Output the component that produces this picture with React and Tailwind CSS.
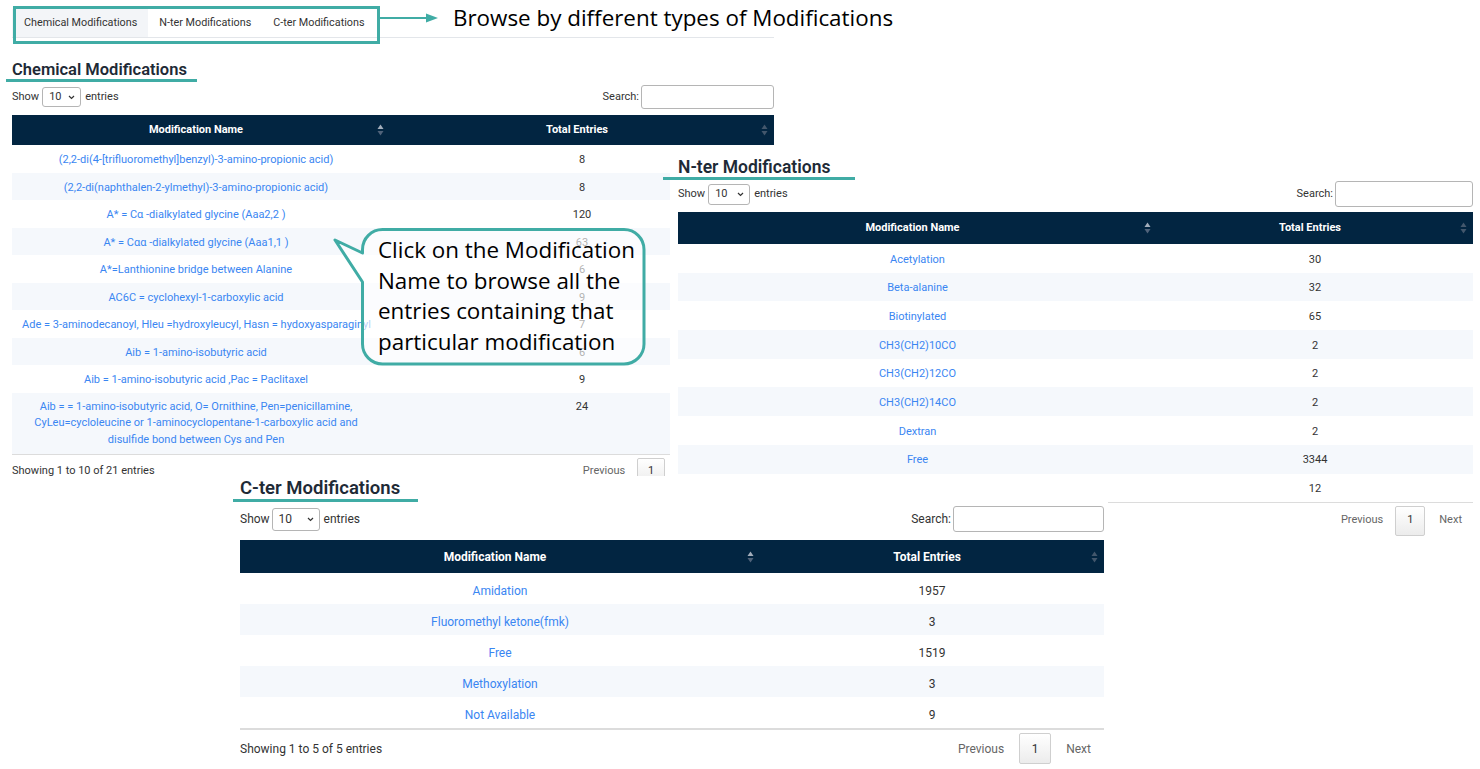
import React from "react";

const chemRows = [
  ["(2,2-di(4-[trifluoromethyl]benzyl)-3-amino-propionic acid)", "8"],
  ["(2,2-di(naphthalen-2-ylmethyl)-3-amino-propionic acid)", "8"],
  ["A* = Cα -dialkylated glycine (Aaa2,2 )", "120"],
  ["A* = Cαα -dialkylated glycine (Aaa1,1 )", "63"],
  ["A*=Lanthionine bridge between Alanine", "6"],
  ["AC6C = cyclohexyl-1-carboxylic acid", "9"],
  ["Ade = 3-aminodecanoyl, Hleu =hydroxyleucyl, Hasn = hydoxyasparaginyl", "7"],
  ["Aib = 1-amino-isobutyric acid", "6"],
  ["Aib = 1-amino-isobutyric acid ,Pac = Paclitaxel", "9"],
];

const nterRows = [
  ["Acetylation", "30"],
  ["Beta-alanine", "32"],
  ["Biotinylated", "65"],
  ["CH3(CH2)10CO", "2"],
  ["CH3(CH2)12CO", "2"],
  ["CH3(CH2)14CO", "2"],
  ["Dextran", "2"],
  ["Free", "3344"],
  ["", "12"],
];

const cterRows = [
  ["Amidation", "1957"],
  ["Fluoromethyl ketone(fmk)", "3"],
  ["Free", "1519"],
  ["Methoxylation", "3"],
  ["Not Available", "9"],
];

function SortIcon({ active }) {
  return (
    <svg
      width="7"
      height="14"
      viewBox="0 0 7 14"
      className="absolute right-[6px] top-1/2 -translate-y-1/2"
    >
      <path d="M0.5 6 L3.5 1.5 L6.5 6 Z" fill={active ? "#a3aebb" : "#43576c"} />
      <path d="M0.5 8 L3.5 12.5 L6.5 8 Z" fill={active ? "#50637a" : "#43576c"} />
    </svg>
  );
}

function Select({ cls }) {
  return (
    <div
      className={
        "flex items-center justify-between border border-[#b5b5b5] rounded-[3px] bg-white pl-[6px] pr-[5px] " +
        cls
      }
    >
      <span>10</span>
      <svg width="7" height="5" viewBox="0 0 7 5">
        <path d="M1 1 L3.5 3.5 L6 1" fill="none" stroke="#333" strokeWidth="1.2" />
      </svg>
    </div>
  );
}

function HeaderRow({ hCls, c1Cls }) {
  return (
    <div className={"flex bg-[#022541] text-white font-bold " + hCls}>
      <div className={"relative shrink-0 flex items-center justify-center pl-[10px] pr-[20px] " + c1Cls}>
        Modification Name
        <SortIcon active />
      </div>
      <div className="relative flex-1 flex items-center justify-center pl-[10px] pr-[20px]">
        Total Entries
        <SortIcon />
      </div>
    </div>
  );
}

function PageBtn({ cls, children }) {
  return (
    <div
      className={
        "flex items-center justify-center border border-[#cfcfcf] rounded-[2px] bg-gradient-to-b from-white to-[#ececec] text-[#333] " +
        cls
      }
    >
      {children}
    </div>
  );
}

function ChemPanel() {
  return (
    <div className="absolute left-[12px] top-[60px] w-[762px] text-[11px] text-[#333]">
      <div className="text-[16.5px] font-semibold leading-[19px] text-[#1e2a36]">
        Chemical Modifications
      </div>
      <div className="-ml-[6px] h-[3px] w-[191px] bg-[#40aca5]"></div>
      <div className="mt-[3px] flex h-[24px] items-center justify-between">
        <div className="flex items-center">
          <span>Show</span>
          <Select cls="ml-[3px] w-[39px] h-[20px]" />
          <span className="ml-[4px]">entries</span>
        </div>
        <div className="flex items-center">
          <span>Search:</span>
          <div className="ml-[2px] h-[24px] w-[133px] border border-[#b5b5b5] rounded-[3px] bg-white"></div>
        </div>
      </div>
      <div className="mt-[6px]">
        <HeaderRow hCls="h-[30px]" c1Cls="w-[378px]" />
        {chemRows.map((r, i) => (
          <div key={i} className={"flex " + (i % 2 === 1 ? "bg-[#f5f8fc]" : "bg-white")}>
            <div className="w-[378px] shrink-0 whitespace-nowrap pl-[10px] pr-[20px] pt-[7px] pb-[4.5px] text-center leading-[16px] text-[#3a86f2]">
              {r[0]}
            </div>
            <div className="flex-1 pt-[7px] pb-[4.5px] text-center leading-[16px]">{r[1]}</div>
          </div>
        ))}
        <div className="flex bg-[#f5f8fc]">
          <div className="w-[378px] shrink-0 pl-[10px] pr-[20px] pt-[6px] pb-[5.5px] text-center leading-[16.5px] text-[#3a86f2]">
            Aib = = 1-amino-isobutyric acid, O= Ornithine, Pen=penicillamine,
            <br />
            CyLeu=cycloleucine or 1-aminocyclopentane-1-carboxylic acid and
            <br />
            disulfide bond between Cys and Pen
          </div>
          <div className="flex-1 pt-[6px] pb-[5.5px] text-center leading-[16.5px]">24</div>
        </div>
      </div>
      <div className="flex h-[34px] items-center border-t border-[#dcdcdc]">
        <div className="w-[565px] shrink-0">Showing 1 to 10 of 21 entries</div>
        <div className="w-[54px] shrink-0 text-center text-[#666]">Previous</div>
        <PageBtn cls="ml-[6px] w-[28px] h-[26px] shrink-0">1</PageBtn>
        <div className="w-[28px] shrink-0 text-center">2</div>
        <div className="w-[28px] shrink-0 text-center">3</div>
        <div className="w-[46px] shrink-0 text-center text-[#666]">Next</div>
      </div>
    </div>
  );
}

function NterPanel() {
  return (
    <div className="absolute left-[670px] top-[150px] h-[392px] w-[810px] bg-white pl-[8px] pr-[7px] text-[11px] text-[#333]">
      <div className="pt-[7px] text-[17.5px] font-semibold leading-[20px] text-[#1e2a36]">
        N-ter Modifications
      </div>
      <div className="-ml-[15px] h-[3px] w-[192px] bg-[#40aca5]"></div>
      <div className="mt-[1px] flex h-[26px] items-center justify-between">
        <div className="flex items-center">
          <span>Show</span>
          <Select cls="ml-[3px] w-[42px] h-[21px]" />
          <span className="ml-[4px]">entries</span>
        </div>
        <div className="flex items-center">
          <span>Search:</span>
          <div className="ml-[2px] h-[26px] w-[138px] border border-[#b5b5b5] rounded-[3px] bg-white"></div>
        </div>
      </div>
      <div className="mt-[5px]">
        <HeaderRow hCls="h-[32px]" c1Cls="w-[479px]" />
        {nterRows.map((r, i) => (
          <div key={i} className={"flex " + (i % 2 === 1 ? "bg-[#f5f8fc]" : "bg-white")}>
            <div className="w-[479px] shrink-0 whitespace-nowrap px-[10px] pt-[7.5px] pb-[5.2px] text-center leading-[16px] text-[#3a86f2]">
              {r[0]}
            </div>
            <div className="flex-1 pt-[7.5px] pb-[5.2px] text-center leading-[16px]">{r[1]}</div>
          </div>
        ))}
      </div>
      <div className="flex h-[36px] items-center justify-end border-t border-[#dcdcdc]">
        <div className="px-[12px] text-[#666]">Previous</div>
        <PageBtn cls="w-[30px] h-[30px]">1</PageBtn>
        <div className="pl-[14px] pr-[11px] text-[#666]">Next</div>
      </div>
    </div>
  );
}

function CterPanel() {
  return (
    <div className="absolute left-[230px] top-[476px] h-[293px] w-[878px] bg-white pl-[10px] pr-[4px] text-[12px] text-[#333]">
      <div className="pt-[1px] text-[18.5px] font-semibold leading-[22px] text-[#1e2a36]">
        C-ter Modifications
      </div>
      <div className="-ml-[7px] h-[3px] w-[185px] bg-[#40aca5]"></div>
      <div className="mt-[4px] flex h-[26px] items-center justify-between">
        <div className="flex items-center">
          <span>Show</span>
          <Select cls="ml-[2px] w-[48px] h-[23px]" />
          <span className="ml-[4px]">entries</span>
        </div>
        <div className="flex items-center">
          <span>Search:</span>
          <div className="ml-[2px] h-[26px] w-[151px] border border-[#b5b5b5] rounded-[3px] bg-white"></div>
        </div>
      </div>
      <div className="mt-[8px]">
        <HeaderRow hCls="h-[33px]" c1Cls="w-[520px]" />
        {cterRows.map((r, i) => (
          <div key={i} className={"flex " + (i % 2 === 1 ? "bg-[#f5f8fc]" : "bg-white")}>
            <div className="w-[520px] shrink-0 whitespace-nowrap px-[10px] pt-[9.5px] pb-[5.5px] text-center leading-[16px] text-[#3a86f2]">
              {r[0]}
            </div>
            <div className="flex-1 pt-[9.5px] pb-[5.5px] text-center leading-[16px]">{r[1]}</div>
          </div>
        ))}
      </div>
      <div className="flex h-[39px] items-center border-t-2 border-[#dcdcdc]">
        <div className="flex-1">Showing 1 to 5 of 5 entries</div>
        <div className="px-[15px] text-[#666]">Previous</div>
        <PageBtn cls="w-[32px] h-[31px]">1</PageBtn>
        <div className="pl-[15px] pr-[13px] text-[#666]">Next</div>
      </div>
    </div>
  );
}

function Callout() {
  return (
    <>
      <svg
        width="320"
        height="150"
        viewBox="0 0 320 150"
        className="absolute left-[330px] top-[220px]"
      >
        <path
          d="M5 20 L32.5 33 L32.5 29.5 A20 20 0 0 1 52.5 9.5 L294 9.5 A20 20 0 0 1 314 29.5 L314 124 A20 20 0 0 1 294 144 L52.5 144 A20 20 0 0 1 32.5 124 L32.5 62 Z"
          fill="rgba(255,255,255,0.62)"
          stroke="#40aca5"
          strokeWidth="3"
          strokeLinejoin="round"
        />
      </svg>
      <div className="absolute left-[378px] top-[235px] font-['Open_Sans',sans-serif] text-[22.4px] leading-[30.7px] text-black">
        Click on the Modification
        <br />
        Name to browse all the
        <br />
        entries containing that
        <br />
        particular modification
      </div>
    </>
  );
}

function TopBar() {
  return (
    <>
      <div className="absolute left-[12px] top-[9px] flex w-[762px] border-b border-[#e3e6ea] text-[10.8px] text-[#333]">
        <div className="flex h-[28px] items-center bg-[#f3f5f8] pl-[12px] pr-[11px] pt-[1px]">Chemical Modifications</div>
        <div className="flex h-[28px] items-center pl-[11px] pr-[11px] pt-[1px]">N-ter Modifications</div>
        <div className="flex h-[28px] items-center pl-[11px] pr-[11px] pt-[1px]">C-ter Modifications</div>
      </div>
      <div className="absolute left-[13px] top-[6px] h-[38px] w-[367px] border-[3px] border-[#40aca5]"></div>
      <svg width="60" height="12" viewBox="0 0 60 12" className="absolute left-[380px] top-[12px]">
        <line x1="0" y1="6" x2="48" y2="6" stroke="#40aca5" strokeWidth="2" />
        <path d="M46 1.5 L58 6 L46 10.5 Z" fill="#40aca5" />
      </svg>
      <div className="absolute left-[453px] top-[3px] font-['Open_Sans',sans-serif] text-[22.4px] leading-[30px] text-black">
        Browse by different types of Modifications
      </div>
    </>
  );
}

export default function App() {
  return (
    <div className="relative h-[769px] w-[1480px] overflow-hidden bg-white font-['Roboto',sans-serif]">
      <TopBar />
      <ChemPanel />
      <NterPanel />
      <Callout />
      <CterPanel />
    </div>
  );
}
